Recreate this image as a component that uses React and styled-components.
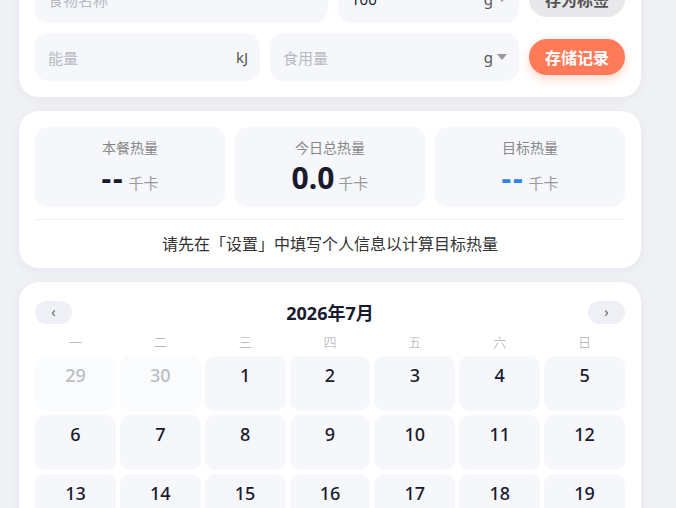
import styled, { createGlobalStyle } from 'styled-components'

const GlobalStyle = createGlobalStyle`
  * { box-sizing: border-box; }
  body {
    margin: 0;
    background: #f0f1f5;
    font-family: "Noto Sans", "Noto Sans CJK SC", sans-serif;
    color: #1a1a2e;
  }
`

const Page = styled.main`
  width: 622px;
  margin: -41px 0 0 19px;
  display: flex;
  flex-direction: column;
  gap: 14px;
`

const Card = styled.section`
  background: #fff;
  border-radius: 20px;
  padding: ${props => props.tight ? '16px 16px 12px' : '16px'};
  box-shadow: 0 2px 12px rgba(30, 40, 80, 0.05);
`

const FormRows = styled.div`
  display: flex;
  flex-direction: column;
  gap: 10px;
`

const FormRow = styled.div`
  display: grid;
  grid-template-columns: ${props => props.cols};
  gap: 10px;
  align-items: center;
`

const Field = styled.div`
  height: 48px;
  border-radius: 14px;
  background: #f6f7fb;
  display: flex;
  align-items: center;
  padding: 0 10px 0 13px;
  font-size: 15px;
`

const Placeholder = styled.span`
  flex: 1;
  color: ${props => props.filled ? '#1a1a2e' : '#b6bac4'};
`

const Unit = styled.span`
  color: #555;
  font-size: 15px;
  display: flex;
  align-items: center;
  gap: 4px;
  padding-right: 2px;
`

const Caret = styled.span`
  width: 0;
  height: 0;
  border-left: 5px solid transparent;
  border-right: 5px solid transparent;
  border-top: 6px solid #999;
`

const PillButton = styled.button`
  height: 36px;
  border: none;
  border-radius: 18px;
  font-family: inherit;
  font-size: 16px;
  font-weight: 700;
  cursor: pointer;
  background: ${props => props.primary ? '#ff7a59' : '#e8e8ea'};
  color: ${props => props.primary ? '#fff' : '#555'};
  box-shadow: ${props => props.primary ? '0 4px 10px rgba(255, 122, 89, 0.3)' : 'none'};
`

const Stats = styled.div`
  display: grid;
  grid-template-columns: repeat(3, 1fr);
  gap: 10px;
`

const StatBox = styled.div`
  background: #f6f7fb;
  border-radius: 14px;
  padding: 11px 0;
  display: flex;
  flex-direction: column;
  align-items: center;
  gap: 2px;
`

const StatLabel = styled.div`
  font-size: 14px;
  line-height: 20px;
  color: #888;
`

const StatValue = styled.div`
  display: flex;
  align-items: baseline;
  line-height: 36px;
  height: 36px;
`

const Number = styled.span`
  font-size: 30px;
  font-weight: 700;
  color: ${props => props.accent ? '#2f80ed' : '#1a1a2e'};
  letter-spacing: ${props => props.dash ? '2px' : '0'};
`

const Kcal = styled.span`
  font-size: 15px;
  color: #999;
  margin-left: 4px;
`

const Note = styled.p`
  margin: 12px 0 0;
  padding-top: 12px;
  border-top: 1px solid #f0f1f4;
  text-align: center;
  font-size: 16px;
  line-height: 24px;
  color: #333;
`

const CalHeader = styled.div`
  height: 28px;
  display: flex;
  align-items: center;
  justify-content: space-between;
  margin-bottom: 6px;
`

const NavButton = styled.button`
  width: 37px;
  height: 23px;
  border: none;
  border-radius: 12px;
  background: #eef0f5;
  color: #666;
  font-size: 14px;
  line-height: 1;
  padding: 0;
  font-family: inherit;
  cursor: pointer;
`

const MonthTitle = styled.h3`
  margin: 0;
  font-size: 18px;
  font-weight: 700;
  color: #1a1a2e;
`

const DayGrid = styled.div`
  display: grid;
  grid-template-columns: repeat(7, 1fr);
  gap: 4px;
`

const Weekday = styled.div`
  height: 20px;
  line-height: 20px;
  text-align: center;
  font-size: 13px;
  font-weight: 300;
  color: #aaa;
`

const DayCell = styled.div`
  height: 55px;
  border-radius: 10px;
  background: ${props => props.outside ? '#fafbfd' : '#f6f7fb'};
  color: ${props => props.outside ? '#bbbcc4' : '#1a1a2e'};
  text-align: center;
  padding-top: 7px;
  font-size: 18px;
  line-height: 24px;
  font-weight: 500;
`

const weekdays = ['一', '二', '三', '四', '五', '六', '日']

const days = [
  { d: 29, outside: true },
  { d: 30, outside: true },
  ...Array.from({ length: 31 }, (_, i) => ({ d: i + 1 })),
  { d: 1, outside: true },
  { d: 2, outside: true },
]

export default function App() {
  return (
    <>
      <GlobalStyle />
      <Page>
        <Card>
          <FormRows>
            <FormRow cols="293px 181px 96px">
              <Field><Placeholder>食物名称</Placeholder></Field>
              <Field><Placeholder filled>100</Placeholder><Unit>g<Caret /></Unit></Field>
              <PillButton>存为标签</PillButton>
            </FormRow>
            <FormRow cols="225px 249px 96px">
              <Field><Placeholder>能量</Placeholder><Unit>kJ</Unit></Field>
              <Field><Placeholder>食用量</Placeholder><Unit>g<Caret /></Unit></Field>
              <PillButton primary>存储记录</PillButton>
            </FormRow>
          </FormRows>
        </Card>

        <Card tight>
          <Stats>
            <StatBox>
              <StatLabel>本餐热量</StatLabel>
              <StatValue><Number dash>--</Number><Kcal>千卡</Kcal></StatValue>
            </StatBox>
            <StatBox>
              <StatLabel>今日总热量</StatLabel>
              <StatValue><Number>0.0</Number><Kcal>千卡</Kcal></StatValue>
            </StatBox>
            <StatBox>
              <StatLabel>目标热量</StatLabel>
              <StatValue><Number dash accent>--</Number><Kcal>千卡</Kcal></StatValue>
            </StatBox>
          </Stats>
          <Note>请先在「设置」中填写个人信息以计算目标热量</Note>
        </Card>

        <Card>
          <CalHeader>
            <NavButton>‹</NavButton>
            <MonthTitle>2026年7月</MonthTitle>
            <NavButton>›</NavButton>
          </CalHeader>
          <DayGrid>
            {weekdays.map(w => <Weekday key={w}>{w}</Weekday>)}
            {days.map((day, i) => (
              <DayCell key={i} outside={day.outside}>{day.d}</DayCell>
            ))}
          </DayGrid>
        </Card>
      </Page>
    </>
  )
}
